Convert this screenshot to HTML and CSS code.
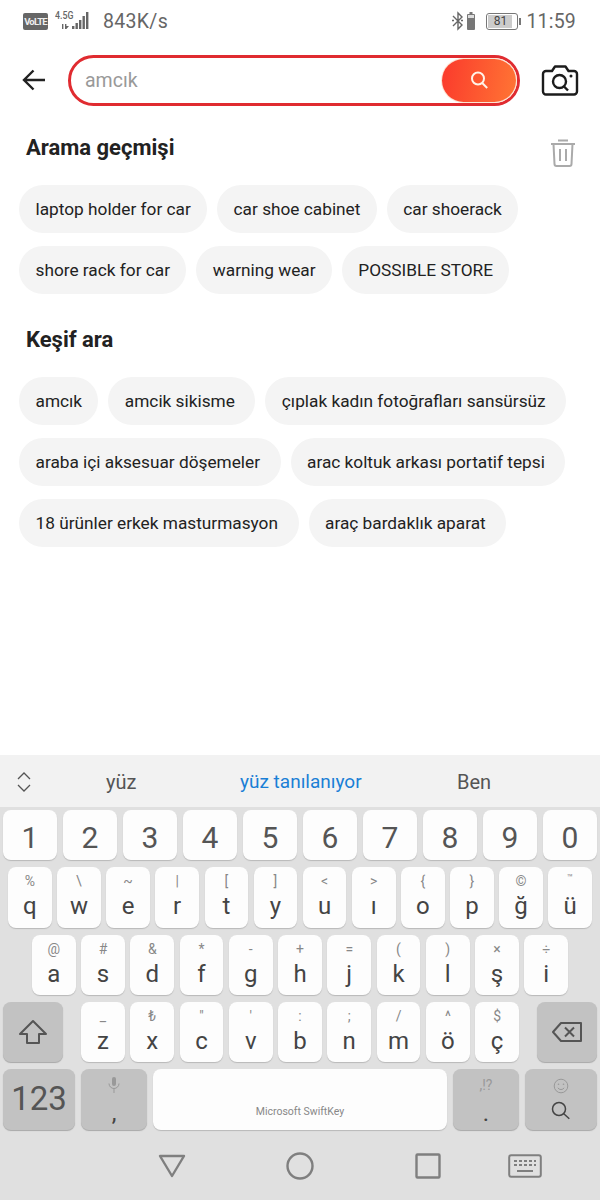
FILE: index.html
```html
<!DOCTYPE html>
<html lang="tr">
<head>
<meta charset="utf-8">
<title>Arama</title>
<link rel="stylesheet" href="styles.css">
</head>
<body>
<div class="page">
  <div class="status">
    <div class="status-left">
      <span class="volte">VoLTE</span>
      <span class="net">
        <span class="net-text">4.5G</span>
        <svg class="signal" width="36" height="20" viewBox="0 0 36 20"><g fill="#666"><rect x="18" y="15" width="2.400" height="3"/><rect x="21.500" y="12" width="2.400" height="6"/><rect x="25" y="9" width="2.400" height="9"/><rect x="28.500" y="5" width="2.400" height="13"/><rect x="32" y="1" width="2.400" height="17"/><path d="M8 13h1.400v5H8zM11 13h1.400v5H11zM12.400 15l2.600 0-2.600 3z"/></g></svg>
      </span>
      <span class="speed">843K/s</span>
    </div>
    <div class="status-right">
      <svg width="24" height="20" viewBox="0 0 24 20"><path d="M1 5l9 9-4 4V2l4 4-9 9" fill="none" stroke="#666" stroke-width="1.400"/><path d="M0 9.500h2M9 9.500h2" stroke="#666" stroke-width="1.400"/><rect x="15" y="3" width="8" height="16" rx="1" fill="#777"/><rect x="17.500" y="1" width="3" height="2" fill="#777"/><rect x="16" y="4" width="6" height="3" fill="#ddd"/></svg>
      <span class="battery"><span class="battery-fill">81</span></span>
      <span class="time">11:59</span>
    </div>
  </div>

  <header class="search-row">
    <svg class="back" width="26" height="24" viewBox="0 0 26 24"><path d="M24 12H3M12.500 2.500L3 12l9.500 9.500" fill="none" stroke="#222" stroke-width="2.400"/></svg>
    <div class="search-box">
      <span class="placeholder">amcık</span>
      <span class="search-btn">
        <svg width="20" height="20" viewBox="0 0 20 20"><circle cx="9" cy="8.500" r="6" fill="none" stroke="#fff3e8" stroke-width="2"/><path d="M13.200 13l5 5" stroke="#fff3e8" stroke-width="2"/></svg>
      </span>
    </div>
    <svg class="camera" width="38" height="32" viewBox="0 0 38 32"><path d="M5 7h6l3-4.500h10.500L27.500 7H33a3 3 0 0 1 3 3v17.500a3 3 0 0 1-3 3H5a3 3 0 0 1-3-3V10a3 3 0 0 1 3-3z" fill="none" stroke="#1c1c1c" stroke-width="2.400" stroke-linejoin="round"/><circle cx="18.500" cy="17.500" r="6.500" fill="none" stroke="#1c1c1c" stroke-width="2.400"/><path d="M23 22.500l4 4" stroke="#1c1c1c" stroke-width="2.400"/><circle cx="30" cy="12" r="1.500" fill="#1c1c1c"/></svg>
  </header>

  <main class="content">
    <section class="sec">
      <div class="sec-head">
        <h2 class="sec-title">Arama geçmişi</h2>
        <svg class="trash" width="26" height="28" viewBox="0 0 26 28"><path d="M8 1.500h10M1 5h24M3.500 5l1 20a2 2 0 0 0 2 2h13a2 2 0 0 0 2-2l1-20M10 10v12M16 10v12" fill="none" stroke="#aaa" stroke-width="2"/></svg>
      </div>
      <div class="chips">
        <span class="chip">laptop holder for car</span>
        <span class="chip">car shoe cabinet</span>
        <span class="chip">car shoerack</span>
        <span class="chip">shore rack for car</span>
        <span class="chip">warning wear</span>
        <span class="chip">POSSIBLE STORE</span>
      </div>
    </section>
    <section class="sec sec-second">
      <h2 class="sec-title">Keşif ara</h2>
      <div class="chips chips-second">
        <span class="chip">amcık</span>
        <span class="chip chip-wide">amcik sikisme</span>
        <span class="chip chip-wide">çıplak kadın fotoğrafları sansürsüz</span>
        <span class="chip chip-wide">araba içi aksesuar döşemeler</span>
        <span class="chip chip-wide">arac koltuk arkası portatif tepsi</span>
        <span class="chip chip-wide">18 ürünler erkek masturmasyon</span>
        <span class="chip chip-wide">araç bardaklık aparat</span>
      </div>
    </section>
  </main>

  <div class="suggest">
    <svg class="suggest-toggle" width="16" height="22" viewBox="0 0 16 22"><path d="M2 8l6-6 6 6M2 14l6 6 6-6" fill="none" stroke="#555" stroke-width="1.300"/></svg>
    <span class="sug sug-1">yüz</span>
    <span class="sug sug-2">yüz tanılanıyor</span>
    <span class="sug sug-3">Ben</span>
  </div>

  <div class="keyboard">
    <div class="row row-num">
      <span class="key num">1</span><span class="key num">2</span><span class="key num">3</span><span class="key num">4</span><span class="key num">5</span><span class="key num">6</span><span class="key num">7</span><span class="key num">8</span><span class="key num">9</span><span class="key num">0</span>
    </div>
    <div class="row row-q">
      <span class="key"><i class="alt">%</i><b class="main">q</b></span>
      <span class="key"><i class="alt">\</i><b class="main">w</b></span>
      <span class="key"><i class="alt">~</i><b class="main">e</b></span>
      <span class="key"><i class="alt">|</i><b class="main">r</b></span>
      <span class="key"><i class="alt">[</i><b class="main">t</b></span>
      <span class="key"><i class="alt">]</i><b class="main">y</b></span>
      <span class="key"><i class="alt">&lt;</i><b class="main">u</b></span>
      <span class="key"><i class="alt">&gt;</i><b class="main">ı</b></span>
      <span class="key"><i class="alt">{</i><b class="main">o</b></span>
      <span class="key"><i class="alt">}</i><b class="main">p</b></span>
      <span class="key"><i class="alt">©</i><b class="main">ğ</b></span>
      <span class="key"><i class="alt alt-tm">™</i><b class="main">ü</b></span>
    </div>
    <div class="row row-a">
      <span class="key"><i class="alt">@</i><b class="main">a</b></span>
      <span class="key"><i class="alt">#</i><b class="main">s</b></span>
      <span class="key"><i class="alt">&amp;</i><b class="main">d</b></span>
      <span class="key"><i class="alt">*</i><b class="main">f</b></span>
      <span class="key"><i class="alt">-</i><b class="main">g</b></span>
      <span class="key"><i class="alt">+</i><b class="main">h</b></span>
      <span class="key"><i class="alt">=</i><b class="main">j</b></span>
      <span class="key"><i class="alt">(</i><b class="main">k</b></span>
      <span class="key"><i class="alt">)</i><b class="main">l</b></span>
      <span class="key"><i class="alt">×</i><b class="main">ş</b></span>
      <span class="key"><i class="alt">÷</i><b class="main">i</b></span>
    </div>
    <div class="row row-z">
      <span class="key fn shift">
        <svg width="30" height="26" viewBox="0 0 30 26"><path d="M15 2L2 15h7v9h12v-9h7z" fill="none" stroke="#555" stroke-width="2" stroke-linejoin="round"/></svg>
      </span>
      <div class="letters">
        <span class="key"><i class="alt">_</i><b class="main">z</b></span>
        <span class="key"><i class="alt">₺</i><b class="main">x</b></span>
        <span class="key"><i class="alt">"</i><b class="main">c</b></span>
        <span class="key"><i class="alt">'</i><b class="main">v</b></span>
        <span class="key"><i class="alt">:</i><b class="main">b</b></span>
        <span class="key"><i class="alt">;</i><b class="main">n</b></span>
        <span class="key"><i class="alt">/</i><b class="main">m</b></span>
        <span class="key"><i class="alt">^</i><b class="main">ö</b></span>
        <span class="key"><i class="alt">$</i><b class="main">ç</b></span>
      </div>
      <span class="key fn shift">
        <svg width="32" height="22" viewBox="0 0 32 22"><path d="M10 2h20v18H10L2 11z" fill="none" stroke="#555" stroke-width="2" stroke-linejoin="round"/><path d="M14 6.500l9 9M23 6.500l-9 9" stroke="#555" stroke-width="2"/></svg>
      </span>
    </div>
    <div class="row row-bottom">
      <span class="key fn k123">123</span>
      <span class="key fn k-wide">
        <svg class="mic" width="12" height="16" viewBox="0 0 12 16"><rect x="4" y="0" width="4" height="9" rx="2" fill="#999"/><path d="M1 6.500a5 5 0 0 0 10 0M6 11.500V16" fill="none" stroke="#999" stroke-width="1"/></svg>
        <b class="main punct">,</b>
      </span>
      <span class="key space"><span class="brand">Microsoft SwiftKey</span></span>
      <span class="key fn k-wide">
        <i class="alt alt-punct">,!?</i>
        <b class="main punct">.</b>
      </span>
      <span class="key fn k-search">
        <svg class="smile" width="16" height="16" viewBox="0 0 16 16"><circle cx="8" cy="8" r="6.800" fill="none" stroke="#999" stroke-width="1"/><circle cx="5.500" cy="6.300" r=".8" fill="#999"/><circle cx="10.500" cy="6.300" r=".8" fill="#999"/><path d="M4.800 9.800a3.800 3.800 0 0 0 6.400 0" fill="none" stroke="#999" stroke-width="1"/></svg>
        <svg width="20" height="20" viewBox="0 0 20 20"><circle cx="8" cy="8" r="6.500" fill="none" stroke="#444" stroke-width="1.500"/><path d="M12.800 12.800l5.500 5" stroke="#444" stroke-width="1.500"/></svg>
      </span>
    </div>
  </div>

  <nav class="nav">
    <svg width="28" height="24" viewBox="0 0 28 24"><path d="M2 2h24L14 22z" fill="none" stroke="#7f7f7f" stroke-width="2.400" stroke-linejoin="round"/></svg>
    <svg width="28" height="28" viewBox="0 0 28 28"><circle cx="14" cy="14" r="12.500" fill="none" stroke="#7f7f7f" stroke-width="2.400"/></svg>
    <svg width="26" height="26" viewBox="0 0 26 26"><rect x="1.500" y="1.500" width="23" height="23" rx="1" fill="none" stroke="#7f7f7f" stroke-width="2.400"/></svg>
    <svg width="34" height="24" viewBox="0 0 34 24"><rect x="1.200" y="1.200" width="31.600" height="21.600" rx="2" fill="none" stroke="#7f7f7f" stroke-width="2"/><path d="M6 7h3M11 7h3M16 7h3M21 7h3M26 7h2M6 11h3M11 11h3M16 11h3M21 11h3M26 11h2M9 17h16" stroke="#7f7f7f" stroke-width="2"/></svg>
  </nav>
</div>
</body>
</html>
```
FILE: styles.css
```css
* { box-sizing: border-box; }
html, body { margin: 0; padding: 0; }
body { font-family: Roboto, "Liberation Sans", sans-serif; background: #fff; }
.page { width: 600px; height: 1200px; display: flex; flex-direction: column; overflow: hidden; }

.status { height: 40px; padding: 2px 24px 0 23px; display: flex; justify-content: space-between; align-items: center; color: #666; flex: none; }
.status-left, .status-right { display: flex; align-items: center; }
.volte { width: 25px; height: 17px; background: #666; color: #eee; border-radius: 2px; font-size: 9.500px; font-weight: 700; display: flex; align-items: center; justify-content: center; letter-spacing: -.8px; overflow: hidden; }
.net { position: relative; width: 36px; height: 20px; margin-left: 6px; display: block; }
.net-text { position: absolute; left: 1px; top: -1px; font-size: 11px; font-weight: 500; line-height: 12px; color: #666; transform: scaleX(.8); transform-origin: left; }
.signal { display: block; }
.speed { font-size: 19.500px; margin-left: 13px; letter-spacing: .3px; color: #666; }
.battery { width: 32px; height: 17px; margin-left: 10px; border: 1px solid #777; border-radius: 3px; padding: 1px; display: block; position: relative; }
.battery::after { content: ""; position: absolute; right: -4px; top: 4px; width: 2px; height: 7px; background: #777; }
.battery-fill { display: block; width: 24px; height: 13px; background: #ccc; color: #444; font-size: 12px; line-height: 13px; text-align: center; }
.time { font-size: 19.500px; margin-left: 8px; color: #666; letter-spacing: .2px; }

.search-row { height: 80px; padding: 0 21px; display: flex; align-items: center; flex: none; }
.back { flex: none; }
.search-box { width: 452px; height: 51px; margin-left: 21px; border: 3px solid #e02b30; border-radius: 26px; display: flex; align-items: center; justify-content: space-between; padding: 0 1px 0 14px; flex: none; }
.placeholder { font-size: 19.500px; color: #999; }
.search-btn { width: 74px; height: 43px; border-radius: 22px; background: linear-gradient(100deg, #fb3a2c, #ff7534); display: flex; align-items: center; justify-content: center; box-shadow: 0 0 0 1px #fde5d3; }
.camera { margin-left: 21px; flex: none; }

.content { flex: 1; padding: 0 19px; }
.sec-head { display: flex; justify-content: space-between; align-items: flex-start; padding-right: 5px; }
.sec-title { margin: 0; padding: 11px 0 0 7px; font-size: 22px; line-height: 34px; font-weight: 700; color: #222; }
.trash { margin-top: 19px; }
.chips { display: flex; flex-wrap: wrap; gap: 13px 10px; margin-top: 18px; }
.chip { height: 48px; padding: 0 16.300px 0 16.500px; border-radius: 24px; background: #f4f4f4; color: #222; font-size: 17.250px; line-height: 48px; white-space: nowrap; }
.chip-wide { padding-right: 20.500px; }
.sec-second { margin-top: 18px; }
.chips-second { margin-top: 20px; }

.suggest { height: 52px; background: #f2f2f2; position: relative; flex: none; color: #555; font-size: 20px; }
.suggest-toggle { position: absolute; left: 16px; top: 16px; }
.sug { position: absolute; top: 15px; line-height: 24px; }
.sug-1 { left: 106px; }
.sug-2 { left: 240px; color: #1a7fd6; font-size: 19px; }
.sug-3 { left: 457px; }

.keyboard { background: #e0e0e0; padding: 3px 3px 0; display: flex; flex-direction: column; gap: 7px; flex: none; }
.row { display: flex; }
.key { flex: 1 1 0; min-width: 0; background: #fdfdfd; border-radius: 8px; box-shadow: 0 1px 1px #b9b9b9; display: flex; flex-direction: column; align-items: center; color: #444; position: relative; }
.alt { font-style: normal; font-size: 14px; line-height: 16px; color: #888; margin-top: 6px; height: 16px; }
.alt-tm { font-size: 10px; margin-top: 3px; height: 19px; }
.main { font-weight: 400; font-size: 24px; line-height: 30px; margin-top: 2px; color: #444; }
.row-num { gap: 6px; }
.num { height: 50px; font-size: 30px; line-height: 56px; color: #555; }
.row-q { height: 61px; padding: 0 5px; gap: 5.500px; }
.row-a { height: 60px; padding: 0 29px; gap: 5.600px; }
.row-z { height: 60px; justify-content: space-between; }
.letters { display: flex; gap: 5.600px; width: 438px; }
.fn { background: #c2c2c2; box-shadow: 0 1px 1px #a8a8a8; }
.shift { flex: none; width: 60px; justify-content: center; }
.row-bottom { height: 61px; gap: 6px; }
.k123 { flex: none; width: 72px; font-size: 33px; line-height: 60px; color: #555; }
.k-wide { flex: none; width: 66px; }
.mic { margin-top: 8px; }
.punct { font-size: 24px; margin-top: 8px; line-height: 24px; }
.alt-punct { color: #999; margin-top: 8px; height: 16px; }
.space { flex: none; width: 294px; justify-content: flex-end; }
.brand { font-size: 10.500px; color: #888; line-height: 14px; margin-bottom: 11px; }
.k-search { flex: none; width: 72px; gap: 7px; }
.smile { margin-top: 9px; }

.nav { flex: none; height: 70px; background: #e0e0e0; display: flex; align-items: center; padding: 2px 0 0 158px; }
.nav svg:nth-child(1) { margin-right: 100px; }
.nav svg:nth-child(2) { margin-right: 101px; }
.nav svg:nth-child(3) { margin-right: 67px; }
```
